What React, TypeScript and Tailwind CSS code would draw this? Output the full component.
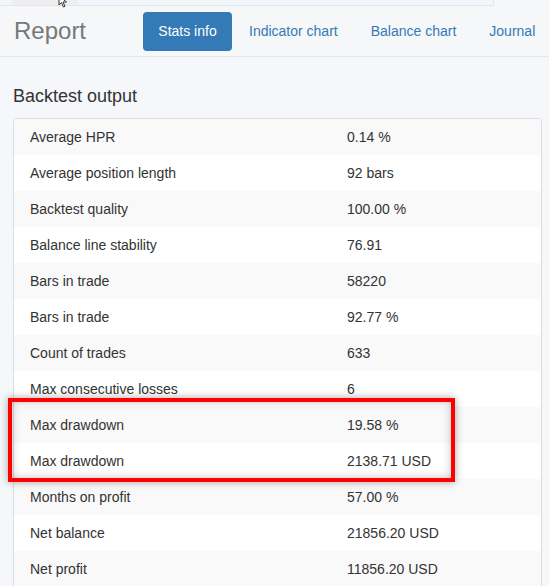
const rows: [string, string][] = [
  ["Average HPR", "0.14 %"],
  ["Average position length", "92 bars"],
  ["Backtest quality", "100.00 %"],
  ["Balance line stability", "76.91"],
  ["Bars in trade", "58220"],
  ["Bars in trade", "92.77 %"],
  ["Count of trades", "633"],
  ["Max consecutive losses", "6"],
  ["Max drawdown", "19.58 %"],
  ["Max drawdown", "2138.71 USD"],
  ["Months on profit", "57.00 %"],
  ["Net balance", "21856.20 USD"],
  ["Net profit", "11856.20 USD"],
];

export default function App() {
  return (
    <div
      className="relative h-[586px] w-[549px] overflow-hidden bg-[#f5f7fa] text-[#333]"
      style={{ fontFamily: '"Liberation Sans", Arial, sans-serif' }}
    >
      {/* top strip */}
      <div className="flex h-[6px]">
        <div className="flex w-[494px] border-r border-b border-[#e3e6ea] bg-[#f2f6fa]">
          <div className="ml-[12px] w-[66px] bg-[#eeeeee]" />
        </div>
      </div>
      <svg className="absolute left-[58px] top-[-4px]" width="12" height="12" viewBox="0 0 12 12">
        <path d="M1 0 L1 9 L3.5 6.5 L5.5 11 L7 10.3 L5 6 L8.5 6 Z" fill="#fff" stroke="#333" strokeWidth="1" />
      </svg>

      {/* header */}
      <div className="flex h-[51px] items-center border-b border-[#e3e7eb] bg-[#f6f7f9]">
        <div className="w-[143px] pl-[14px] text-[24px] text-[#777]">Report</div>
        <div className="flex items-center text-[14px] text-[#337ab7]">
          <div className="flex h-[39px] w-[89px] items-center justify-center rounded-[4px] bg-[#337ab7] text-white">
            Stats info
          </div>
          <div className="pl-[17px] pr-[33px]">Indicator chart</div>
          <div className="pr-[33px]">Balance chart</div>
          <div>Journal</div>
        </div>
      </div>

      {/* body */}
      <div className="pl-[13px] pr-[7px] pt-[28px]">
        <h3 className="mb-[11px] h-[22px] text-[18px] leading-[22px]">Backtest output</h3>
        <div className="overflow-hidden rounded-t-[4px] border border-[#dddddd] bg-white text-[14px]">
          {rows.map(([k, v], i) => (
            <div
              key={i}
              className={`flex h-[36px] items-center ${i % 2 === 0 ? "bg-[#f9f9f9]" : "bg-white"}`}
            >
              <div className="w-[333px] pl-[16px]">{k}</div>
              <div>{v}</div>
            </div>
          ))}
        </div>
      </div>

      {/* highlight */}
      <div className="absolute left-[8px] top-[398px] h-[84px] w-[447px] border-[4px] border-[#ff0000] shadow-[0_0_8px_rgba(0,0,0,0.35),inset_0_0_8px_rgba(0,0,0,0.25)]" />
    </div>
  );
}
